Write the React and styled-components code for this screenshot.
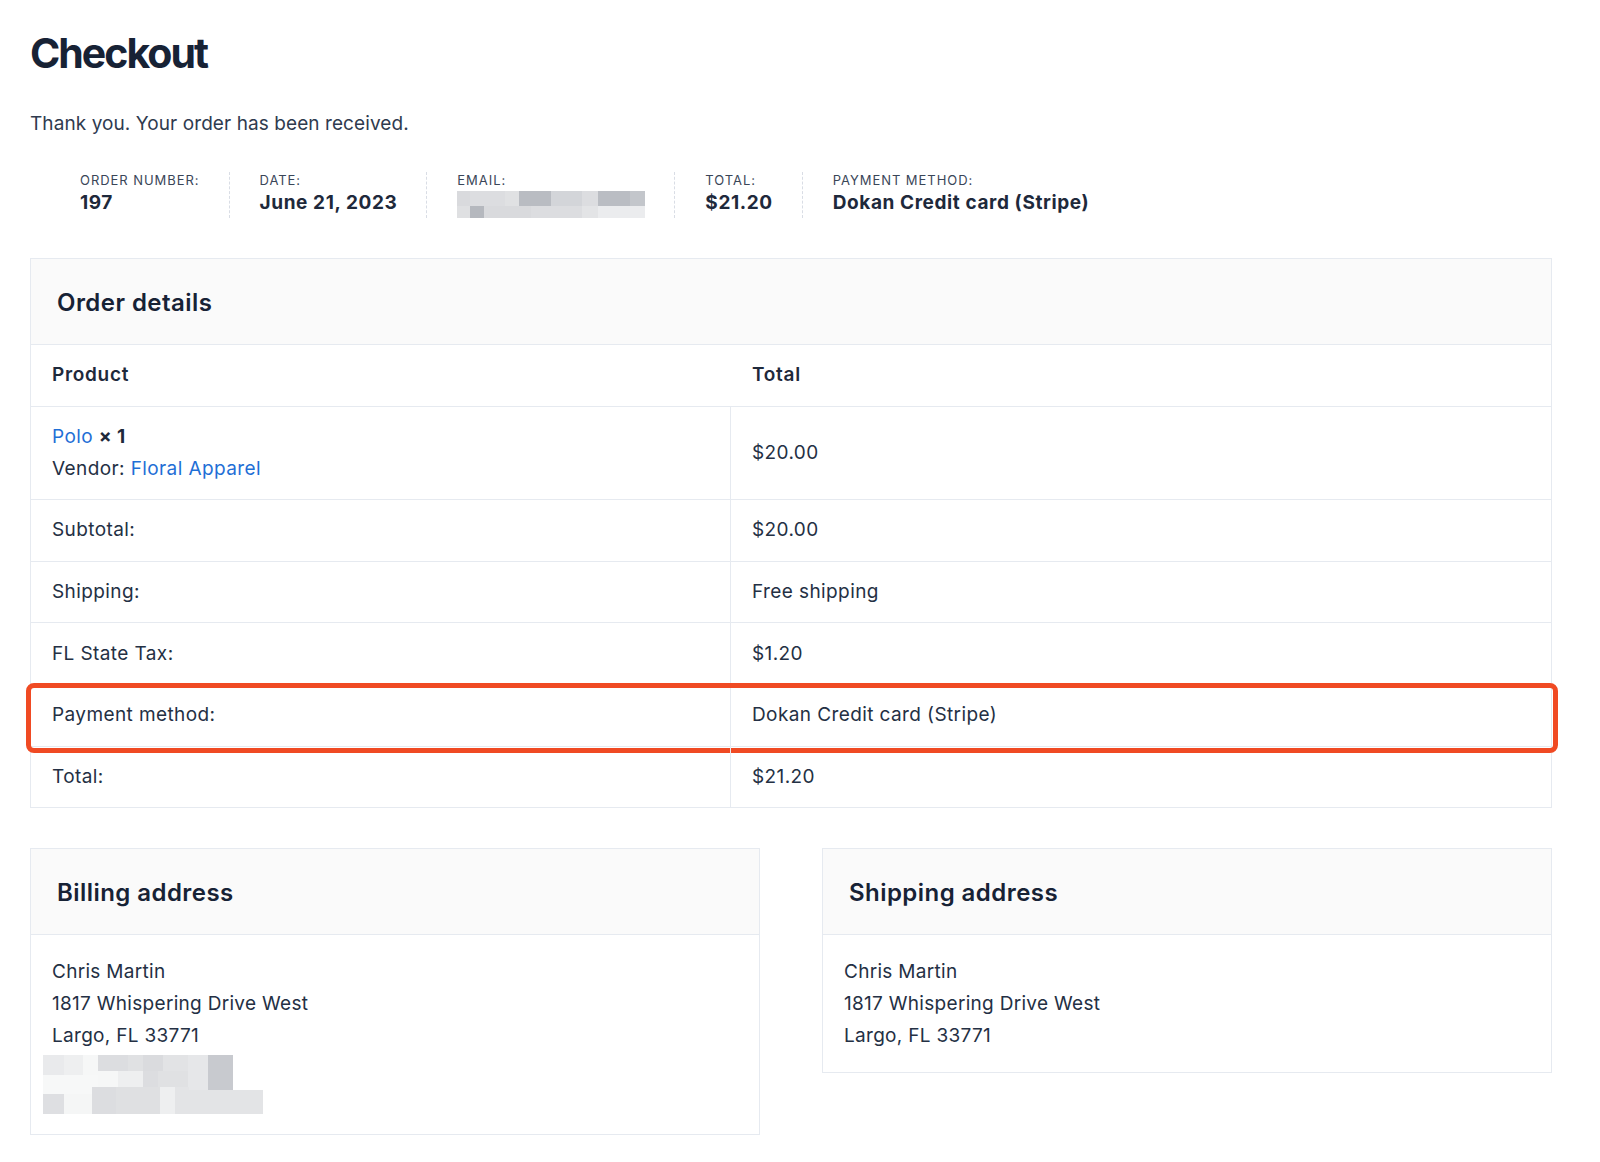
import React from "react";
import styled, { createGlobalStyle } from "styled-components";

const Global = createGlobalStyle`
  html, body { margin: 0; padding: 0; background: #ffffff; }
  body {
    font-family: Inter, "Noto Sans", "Liberation Sans", sans-serif;
    color: #1e293b;
    -webkit-font-smoothing: antialiased;
  }
  * { box-sizing: border-box; }
`;

const Page = styled.main`
  padding: 27px 48px 40px 30px;
`;

const Title = styled.h1`
  margin: 0;
  font-size: 41px;
  line-height: 53px;
  font-weight: 700;
  letter-spacing: -2px;
  color: #172235;
`;

const Notice = styled.p`
  margin: 29px 0 0;
  font-size: 19px;
  line-height: 30px;
  letter-spacing: 0.08px;
  color: #2f3b4f;
`;

const Overview = styled.ul`
  list-style: none;
  margin: 33px 0 0;
  padding: 0 0 0 50px;
  display: flex;
`;

const OverviewItem = styled.li`
  display: flex;
  flex-direction: column;
  padding-right: 29px;
  margin-right: 30px;
  border-right: ${(p) => (p.$last ? "none" : "1px dashed #d9dde5")};
`;

const OverviewLabel = styled.span`
  font-size: 13px;
  line-height: 17px;
  letter-spacing: 0.95px;
  text-transform: uppercase;
  color: #3a4658;
`;

const OverviewValue = styled.strong`
  font-size: 19px;
  line-height: 28px;
  font-weight: 700;
  letter-spacing: 0.6px;
  color: #1e293b;
`;

const Box = styled.section`
  border: 1px solid #e6eaf0;
  margin-top: ${(p) => p.$mt || 0}px;
`;

const BoxHeader = styled.header`
  background: #fafafa;
  border-bottom: 1px solid #e6eaf0;
  padding: 29px 26px 26px;
`;

const BoxTitle = styled.h2`
  margin: 0;
  font-size: 24px;
  line-height: 30px;
  font-weight: 600;
  letter-spacing: 0.45px;
  color: #172235;
`;

const Row = styled.div`
  position: relative;
  display: grid;
  grid-template-columns: 700px 1fr;
  border-bottom: ${(p) => (p.$last ? "none" : "1px solid #e6eaf0")};

  ${(p) =>
    p.$highlight &&
    `
    &::after {
      content: "";
      position: absolute;
      top: -2px;
      left: -5px;
      right: -7px;
      bottom: -7px;
      border: 5px solid #f04a23;
      border-radius: 8px;
      pointer-events: none;
    }
  `}
`;

const Cell = styled.div`
  padding: 14.3px 21px;
  font-size: 19px;
  line-height: 32px;
  font-weight: ${(p) => (p.$head ? 600 : 400)};
  letter-spacing: ${(p) => (p.$head ? "0.7px" : "0.4px")};
  color: ${(p) => (p.$head ? "#1e293b" : "#243044")};
  border-right: ${(p) => (p.$divider ? "1px solid #e6eaf0" : "none")};
  display: flex;
  flex-direction: column;
  justify-content: center;
`;

const Link = styled.a`
  color: #1f6fd6;
  text-decoration: none;
`;

const Qty = styled.strong`
  font-weight: 700;
  color: #1e293b;
`;

const Addresses = styled.div`
  margin-top: 40px;
  display: grid;
  grid-template-columns: 1fr 1fr;
  column-gap: 62px;
  align-items: start;
`;

const Address = styled.address`
  font-style: normal;
  padding: 21px 21px 20px;
  font-size: 19px;
  line-height: 32px;
  letter-spacing: 0.3px;
  color: #243044;
  display: flex;
  flex-direction: column;
`;

const Redacted = styled.svg`
  display: block;
  margin: ${(p) => p.$m || "0"};
`;

const emailBlocks = [
  [0, 0, 13, 15, "#d9dadd"],
  [13, 0, 15, 15, "#dcdde0"],
  [28, 0, 20, 15, "#dcdde0"],
  [48, 0, 14, 15, "#e0e1e3"],
  [62, 0, 32, 15, "#b9bcc2"],
  [94, 0, 31, 15, "#d3d5d9"],
  [125, 0, 16, 15, "#dcdde0"],
  [141, 0, 32, 15, "#babdc3"],
  [173, 0, 15, 15, "#c3c6cb"],
  [0, 15, 13, 12, "#dfe0e2"],
  [13, 15, 14, 12, "#b5b8be"],
  [27, 15, 47, 12, "#d9dadd"],
  [74, 15, 51, 12, "#dcdde0"],
  [125, 15, 16, 12, "#e3e4e6"],
  [141, 15, 47, 12, "#ebecee"],
];

const billingBlocks = [
  [0, 0, 21, 20, "#e9eaec"],
  [21, 0, 19, 20, "#eeeff0"],
  [40, 0, 15, 20, "#f6f7f7"],
  [55, 0, 30, 16, "#dcdde0"],
  [85, 0, 15, 16, "#e0e1e3"],
  [100, 0, 20, 16, "#dadbde"],
  [120, 0, 25, 16, "#e2e3e5"],
  [145, 0, 20, 37, "#e6e7e9"],
  [165, 0, 25, 35, "#c8cacf"],
  [0, 20, 55, 19, "#f7f8f8"],
  [55, 16, 20, 16, "#f6f7f7"],
  [75, 16, 25, 16, "#eeeff0"],
  [100, 16, 15, 16, "#dcdde0"],
  [115, 16, 30, 16, "#e0e1e3"],
  [55, 32, 45, 7, "#e0e1e3"],
  [0, 39, 21, 20, "#dedfe2"],
  [21, 39, 28, 20, "#f5f6f6"],
  [49, 32, 24, 27, "#dcdde0"],
  [73, 32, 44, 27, "#dfe0e2"],
  [117, 32, 15, 27, "#eeeff0"],
  [132, 32, 14, 27, "#e3e4e6"],
  [146, 35, 74, 24, "#e3e4e6"],
];

function Blur({ blocks, width, height, m }) {
  return (
    <Redacted $m={m} width={width} height={height} viewBox={`0 0 ${width} ${height}`} aria-hidden="true">
      {blocks.map(([x, y, w, h, c], i) => (
        <rect key={i} x={x} y={y} width={w} height={h} fill={c} />
      ))}
    </Redacted>
  );
}

const overview = [
  { label: "Order number:", value: "197" },
  { label: "Date:", value: "June 21, 2023" },
  { label: "Email:", blur: true },
  { label: "Total:", value: "$21.20" },
  { label: "Payment method:", value: "Dokan Credit card (Stripe)" },
];

const totals = [
  { label: "Subtotal:", value: "$20.00" },
  { label: "Shipping:", value: "Free shipping" },
  { label: "FL State Tax:", value: "$1.20" },
  { label: "Payment method:", value: "Dokan Credit card (Stripe)", highlight: true },
  { label: "Total:", value: "$21.20" },
];

export default function App() {
  return (
    <>
      <Global />
      <Page>
        <Title>Checkout</Title>
        <Notice>Thank you. Your order has been received.</Notice>

        <Overview>
          {overview.map((o, i) => (
            <OverviewItem key={o.label} $last={i === overview.length - 1}>
              <OverviewLabel>{o.label}</OverviewLabel>
              {o.blur ? (
                <Blur blocks={emailBlocks} width={188} height={27} m="2px 0 0" />
              ) : (
                <OverviewValue>{o.value}</OverviewValue>
              )}
            </OverviewItem>
          ))}
        </Overview>

        <Box $mt={40}>
          <BoxHeader>
            <BoxTitle>Order details</BoxTitle>
          </BoxHeader>
          <Row>
            <Cell $head>Product</Cell>
            <Cell $head>Total</Cell>
          </Row>
          <Row>
            <Cell $divider>
              <span>
                <Link href="#">Polo</Link> <Qty>× 1</Qty>
              </span>
              <span>
                Vendor: <Link href="#">Floral Apparel</Link>
              </span>
            </Cell>
            <Cell>$20.00</Cell>
          </Row>
          {totals.map((t, i) => (
            <Row key={t.label} $highlight={t.highlight} $last={i === totals.length - 1}>
              <Cell $divider>{t.label}</Cell>
              <Cell>{t.value}</Cell>
            </Row>
          ))}
        </Box>

        <Addresses>
          <Box>
            <BoxHeader>
              <BoxTitle>Billing address</BoxTitle>
            </BoxHeader>
            <Address>
              <span>Chris Martin</span>
              <span>1817 Whispering Drive West</span>
              <span>Largo, FL 33771</span>
              <Blur blocks={billingBlocks} width={220} height={59} m="3px 0 0 -9px" />
            </Address>
          </Box>
          <Box>
            <BoxHeader>
              <BoxTitle>Shipping address</BoxTitle>
            </BoxHeader>
            <Address>
              <span>Chris Martin</span>
              <span>1817 Whispering Drive West</span>
              <span>Largo, FL 33771</span>
            </Address>
          </Box>
        </Addresses>
      </Page>
    </>
  );
}
